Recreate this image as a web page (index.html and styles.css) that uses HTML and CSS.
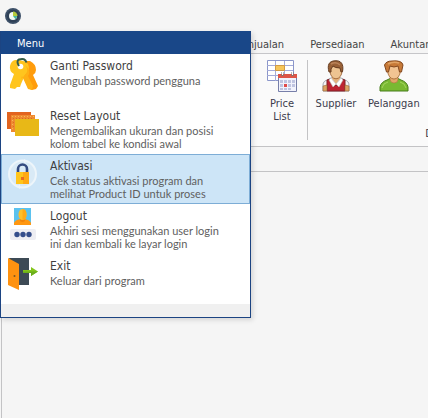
FILE: index.html
```
<!DOCTYPE html>
<html lang="id">
<head>
<meta charset="utf-8">
<meta name="viewport" content="width=device-width, initial-scale=1">
<title>Menu</title>
<link rel="stylesheet" href="styles.css">
</head>
<body>
<div class="app">
  <header class="titlebar">
    <svg class="logo" viewBox="0 0 16 16" aria-hidden="true">
      <circle cx="8" cy="8" r="8" fill="#3d5068"/>
      <circle cx="8" cy="8" r="6.3" fill="#2f4057"/>
      <path d="M8 4a4 4 0 1 0 4 4H8z" fill="#f4faf5"/>
      <path d="M8 4v4l2.5 3.2A4 4 0 0 0 12 8z" fill="#45b79c"/>
      <path d="M8 3.500V8h4.500A4.500 4.500 0 0 0 8 3.500z" fill="#b5ca3c"/>
    </svg>
  </header>
  <nav class="tabs">
    <button class="tab">Penjualan</button>
    <button class="tab">Persediaan</button>
    <button class="tab">Akuntansi</button>
  </nav>
  <section class="ribbon">
    <div class="group group-price">
      <button class="tool">
        <svg class="tool-icon" viewBox="0 0 32 32" aria-hidden="true">
          <path d="M1.500 .5h26v20h-26z" fill="#fff" stroke="#8b96ca"/>
          <path d="M1 5.500h26M1 10.500h26M1 15.500h26M9.500 1v20M18.500 1v20" stroke="#a4abd9" fill="none"/>
          <path d="M9.500 5.500h9v5h-9z" fill="#f6c65a" stroke="#d09a45"/>
          <path d="M12.500 15.500h18v16h-18z" fill="#f2f3fc" stroke="#777fa9"/>
          <path d="M12 14h19v4H12z" fill="#dd5547"/>
          <path d="M16.500 12v4M26.500 12v4" stroke="#777" stroke-width="2"/>
          <path d="M16.500 12v3M26.500 12v3" stroke="#fff"/>
          <path d="M14 20h3v3h-3zM18 20h3v3h-3zM22 20h3v3h-3zM26 20h3v3h-3zM14 24h3v3h-3zM22 24h3v3h-3zM26 24h3v3h-3zM14 28h3v2h-3zM18 28h3v2h-3zM22 28h3v2h-3z" fill="#c0c5e1"/>
          <path d="M18 24h3v3h-3z" fill="#e04a4a"/>
        </svg>
        <span>Price<br>List</span>
      </button>
    </div>
    <div class="group group-data">
      <div class="tools">
        <button class="tool">
          <svg class="tool-icon" viewBox="0 0 32 32" aria-hidden="true">
            <path d="M3 31V25Q3 21 8 19.500L13 17h6l5 2.500Q29 21 29 25v6z" fill="#f3f4f7" stroke="#a3a6b0"/>
            <path d="M7 20l4-1 5 7 5-7 4 1v11H7z" fill="#bd2433" stroke="#812027"/>
            <path d="M3 31v-5l4-1v6zM25 31v-6l4 1v5z" fill="#dca465" stroke="#936234" stroke-width=".6"/>
            <path d="M12 15h8v4l-4 5-4-5z" fill="#e5b27c"/>
            <path d="M11 18l5 6-3 3-4-7zM21 18l-5 6 3 3 4-7z" fill="#fff" stroke="#bbb" stroke-width=".6"/>
            <ellipse cx="16" cy="11" rx="6" ry="7.800" fill="#edc391" stroke="#94592e" stroke-width=".8"/>
            <path d="M9 12C7 5 9 1 15 .8c6-.5 9 3 7.500 11L21 12l-1-4q-5 0-7-2l-2 3v3z" fill="#986036" stroke="#663c20"/>
            <path d="M11 4q5-3 9 1" stroke="#ba835a" stroke-width="1.500" fill="none"/>
          </svg>
          <span>Supplier</span>
        </button>
        <button class="tool">
          <svg class="tool-icon" viewBox="0 0 32 32" aria-hidden="true">
            <path d="M2 31V27Q3 22 9 20l4-2h6l4 2q6 2 7 7v4z" fill="#79b932" stroke="#477c1b"/>
            <path d="M4 28q1-5 6-6M28 28q-1-5-6-6" stroke="#a3d45d" fill="none"/>
            <path d="M12 16h8v3q0 4-4 4t-4-4z" fill="#e2a568" stroke="#ae7540" stroke-width=".6"/>
            <ellipse cx="16" cy="11" rx="6.300" ry="8" fill="#f2c493" stroke="#a26430" stroke-width=".8"/>
            <path d="M8.500 12L6.500 5Q8 1 14 1q10-1 11 4l-1.500 7h-2L20 6q-4 2-8 0l-1.500 6z" fill="#c77a38" stroke="#824820"/>
            <path d="M10 4q5-3 11-1" stroke="#e0a365" stroke-width="1.500" fill="none"/>
          </svg>
          <span>Pelanggan</span>
        </button>
      </div>
      <span class="caption">Data</span>
    </div>
  </section>
  <div class="strip"></div>
  <main class="workspace"></main>
  <div class="menu">
    <div class="menu-head">Menu</div>
    <button class="item">
      <svg class="icon" viewBox="0 0 32 32" aria-hidden="true">
        <path d="M19 3h5q6 3 6 9 0 3-3 5l5 11-2 3-4 1-4-2-6-15 1-9z" fill="#ff9c0c"/>
        <path d="M12 2H9Q5 3 4 8q-1 5 4 8L4 27l0 3 5 1 2-2 3 0 1-3 4-9q6-4 3-11-2-3-9-4z" fill="#ffc51e"/>
        <path d="M19 7q5 6-1 11l-3 3 1-3 6 13 4 1 1-4-5-10q3-5-1-9z" fill="#ffb014"/>
        <circle cx="14.500" cy="8.500" r="2.800" fill="#fff"/>
        <path d="M13 8q-3-5 0-6.500 6-2 7.500 3" fill="none" stroke="#355d48" stroke-width="2"/>
      </svg>
      <span class="text"><span class="name">Ganti Password</span><span class="desc">Mengubah password pengguna</span></span>
    </button>
    <button class="item">
      <svg class="icon" viewBox="0 0 32 32" aria-hidden="true">
        <path d="M1 4h24v17H1z" fill="#e2641f"/>
        <path d="M5 7h24v17H5z" fill="#ef8a30"/>
        <path d="M6 8.500h22M6 12.500h3M6 16.500h3M6 20.500h3" stroke="#f8b45d" stroke-dasharray="1 2"/>
        <path d="M7 10.500h20M7 14.500h2M7 18.500h2" stroke="#d96c23" stroke-dasharray="1 2"/>
        <path d="M9 11h24v17H9z" fill="#e8b817"/>
      </svg>
      <span class="text"><span class="name">Reset Layout</span><span class="desc">Mengembalikan ukuran dan posisi<br>kolom tabel ke kondisi awal</span></span>
    </button>
    <button class="item selected">
      <svg class="icon" viewBox="0 0 32 32" aria-hidden="true">
        <circle cx="16.500" cy="16" r="13.500" fill="#d9eaf6" stroke="#edf5fa" stroke-width="2"/>
        <path d="M18 1l3 2-3 3M14 31l-3-2 3-3" fill="#edf5fa"/>
        <path d="M12 15v-4a4.500 4.500 0 0 1 9 0v4" fill="none" stroke="#344b80" stroke-width="2.600"/>
        <path d="M10 14h13v12H10z" fill="#ffc51b"/>
        <path d="M17 14h6v12h-6z" fill="#ffa912"/>
        <path d="M15 19h3v3h-3z" fill="#e86b1e"/>
      </svg>
      <span class="text"><span class="name">Aktivasi</span><span class="desc">Cek status aktivasi program dan<br>melihat Product ID untuk proses</span></span>
    </button>
    <button class="item">
      <svg class="icon" viewBox="0 0 32 32" aria-hidden="true">
        <path d="M8 0h17v17H8z" fill="#5bc2ef"/>
        <path d="M8 17v-2q1-3 6-4h5q5 1 6 4v2z" fill="#ff9711"/>
        <path d="M14 10h5v3q-2.500 2-5 0z" fill="#f0840c"/>
        <ellipse cx="16.500" cy="6.500" rx="4" ry="5.500" fill="#ffc02a"/>
        <path d="M16.500 1q4 0 4 5.500t-4 5.500z" fill="#ffab18"/>
        <rect x="4" y="21" width="26" height="11" rx="2" fill="#eeeef3"/>
        <circle cx="11" cy="26.500" r="2.700" fill="#354e8b"/><circle cx="17" cy="26.500" r="2.700" fill="#354e8b"/><circle cx="23" cy="26.500" r="2.700" fill="#354e8b"/>
      </svg>
      <span class="text"><span class="name">Logout</span><span class="desc">Akhiri sesi menggunakan user login<br>ini dan kembali ke layar login</span></span>
    </button>
    <button class="item">
      <svg class="icon" viewBox="0 0 32 32" aria-hidden="true">
        <path d="M3 0h20v27H13z" fill="#3d4a55"/>
        <path d="M2 0l11 6v26L2 27z" fill="#ff9210"/>
        <circle cx="8.500" cy="18" r="1" fill="#7c5726"/>
        <path d="M17 12h8V9l7 4.500-7 4.500v-3h-8z" fill="#82c51b"/>
        <path d="M17 13.500h15l-7 4.500v-3h-8z" fill="#6bae1b"/>
      </svg>
      <span class="text"><span class="name">Exit</span><span class="desc">Keluar dari program</span></span>
    </button>
    <div class="menu-foot"></div>
  </div>
</div>
</body>
</html>
```
FILE: styles.css
```
* { box-sizing: border-box; }

body {
  margin: 0;
  background: #f5f5f5;
  color: #444;
  font-family: "DejaVu Sans Condensed", "DejaVu Sans", sans-serif;
  font-size: 11px;
  line-height: 13px;
}

button {
  margin: 0;
  padding: 0;
  border: 0;
  background: none;
  color: inherit;
  font: inherit;
}

.app {
  position: relative;
  display: flex;
  flex-direction: column;
  min-height: 100vh;
  overflow: hidden;
}

.titlebar { height: 31px; padding: 8px 5px; }
.logo { display: block; width: 16px; height: 16px; }

.tabs {
  display: flex;
  gap: 26px;
  height: 23px;
  padding-left: 236px;
  border-bottom: 1px solid #c6c6c9;
}

.tab { flex: none; padding-top: 4px; }

.ribbon {
  display: flex;
  height: 93px;
  padding-top: 6px;
  border-bottom: 1px solid #c3c3c5;
  background: #fafafa;
  color: #3c3c4c;
}

.group { flex: none; height: 80px; }
.group-price { padding-left: 258px; padding-right: 1px; border-right: 1px solid #c3c3c5; }
.tools { display: flex; gap: 8px; }

.group-data {
  display: flex;
  flex-direction: column;
  justify-content: space-between;
  width: 254px;
  padding-left: 4px;
}

.caption { align-self: center; }
.tool { display: flex; flex-direction: column; align-items: center; gap: 5px; min-width: 48px; }
.tool-icon { width: 32px; height: 32px; }

.strip { height: 25px; border-bottom: 1px solid #c3c3c5; }
.workspace { flex: 1; margin-left: 1px; border-left: 1px solid #c3c3c5; }

.menu {
  position: absolute;
  top: 31px;
  left: 0;
  width: 251px;
  border: 1px solid #1c4482;
  border-top: 0;
  background: #fff;
  box-shadow: 2px 2px 5px #0002;
}

.menu-head { height: 23px; padding: 6px 16px; background: #194788; color: #fff; }

.item {
  display: flex;
  gap: 12px;
  width: 100%;
  height: 50px;
  padding: 3px 4px;
  border: 1px solid transparent;
  text-align: left;
}

.selected { border-color: #7dadd6; background: #cde5f7; }
.icon { flex: none; width: 32px; height: 32px; overflow: visible; }
.text { display: flex; flex-direction: column; white-space: nowrap; }
.name { color: #3f3f3f; font-size: 12px; line-height: 16px; }
.desc { color: #606060; font-family: Lato, sans-serif; }
.menu-foot { height: 13px; background: #f0f0f0; }
```
